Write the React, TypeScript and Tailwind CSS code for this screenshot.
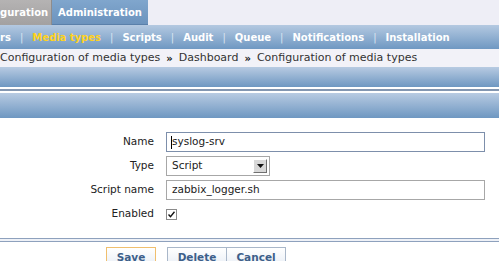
export default function App() {
  const menu = ['rs', 'Media types', 'Scripts', 'Audit', 'Queue', 'Notifications', 'Installation']

  return (
    <div className="w-[499px] h-[261px] overflow-hidden bg-white text-[#222] font-['DejaVu_Sans',Verdana,sans-serif]">
      {/* Top tabs */}
      <div className="flex h-[25px] bg-[#eeeef6]">
        <div className="flex items-center w-[52px] pr-[6px] bg-gradient-to-b from-[#b5b3b3] to-[#a3a1a1] border-r border-[#8e8c8c] text-white text-[10px] font-bold">
          guration
        </div>
        <div className="flex items-center w-[96px] pl-[6px] bg-gradient-to-b from-[#80a6cd] to-[#6c93bd] border-b border-[#5a80aa] text-white text-[10px] font-bold">
          Administration
        </div>
      </div>

      {/* Sub menu */}
      <div className="flex items-center h-[24px] bg-gradient-to-b from-[#b4c9e1] to-[#6f98c2] text-[10px] font-bold">
        {menu.map((m, i) => (
          <div key={m} className="flex items-center">
            {i > 0 && <span className="px-[9px] font-normal text-[#dbe5f1]">|</span>}
            <span className={m === 'Media types' ? 'text-[#ffd21e]' : 'text-white'}>{m}</span>
          </div>
        ))}
      </div>

      {/* Breadcrumb */}
      <div className="flex items-center h-[18px] bg-[#f2f2f8] text-[11px] text-[#333]">
        <span>Configuration of media types</span>
        <span className="px-[6px] text-[10px] font-bold text-[#111]">»</span>
        <span>Dashboard</span>
        <span className="px-[6px] text-[10px] font-bold text-[#111]">»</span>
        <span>Configuration of media types</span>
      </div>

      {/* Header bars */}
      <div className="h-[20px] bg-gradient-to-b from-[#b8cbe2] to-[#6e97c1]" />
      <div className="h-[2px] bg-white" />
      <div className="h-[2px] bg-[#8396b0]" />
      <div className="h-[2px] bg-white" />
      <div className="h-[25px] bg-gradient-to-b from-[#b8cbe2] to-[#6e97c1]" />

      {/* Form */}
      <div className="pt-[14px] flex flex-col gap-[4px] text-[10.5px]">
        <div className="flex items-center h-[20px]">
          <div className="w-[155px] text-right pr-[1px]">Name</div>
          <div className="ml-[11px] w-[319px] h-[20px] border border-[#7d8fab] bg-white flex items-center pl-[4px]">
            <span className="w-px h-[13px] bg-black" />
            <span>syslog-srv</span>
          </div>
        </div>
        <div className="flex items-center h-[20px]">
          <div className="w-[155px] text-right pr-[1px]">Type</div>
          <div className="ml-[11px] w-[104px] h-[20px] border border-[#a7a7a7] bg-white flex items-center justify-between pl-[5px] pr-[2px]">
            <span>Script</span>
            <div className="w-[14px] h-[14px] bg-[#d8d8d8] border border-t-white border-l-white border-r-[#707070] border-b-[#707070] flex items-center justify-center">
              <svg width="7" height="4" viewBox="0 0 7 4">
                <path d="M0 0h7L3.5 4z" fill="#111" />
              </svg>
            </div>
          </div>
        </div>
        <div className="flex items-center h-[20px]">
          <div className="w-[155px] text-right pr-[1px]">Script name</div>
          <div className="ml-[11px] w-[319px] h-[20px] border border-[#a7a7a7] bg-white flex items-center pl-[5px]">
            zabbix_logger.sh
          </div>
        </div>
        <div className="flex items-center h-[20px]">
          <div className="w-[155px] text-right pr-[1px]">Enabled</div>
          <div className="ml-[11px] w-[11px] h-[11px] border border-[#8a8a8a] bg-white flex items-center justify-center">
            <svg width="7" height="7" viewBox="0 0 7 7">
              <path d="M0.5 3.5l2 2.2L6.5 0.8" stroke="#111" strokeWidth="1.4" fill="none" />
            </svg>
          </div>
        </div>
      </div>

      {/* Footer */}
      <div className="mt-[14px] h-[4px] border-t border-b border-[#8ea1bd] bg-[#eef1f7]" />
      <div className="flex pt-[5px] pl-[106px] text-[10.5px] font-bold text-[#3d5f8a]">
        <div className="w-[50px] h-[22px] border border-[#f0bf6e] bg-gradient-to-b from-white to-[#e6ecf4] flex items-center justify-center">Save</div>
        <div className="ml-[11px] w-[60px] h-[22px] border border-[#a9b7c9] bg-gradient-to-b from-white to-[#e6ecf4] flex items-center justify-center">Delete</div>
        <div className="w-[59px] h-[22px] border border-l-0 border-[#a9b7c9] bg-gradient-to-b from-white to-[#e6ecf4] flex items-center justify-center">Cancel</div>
      </div>
    </div>
  )
}
